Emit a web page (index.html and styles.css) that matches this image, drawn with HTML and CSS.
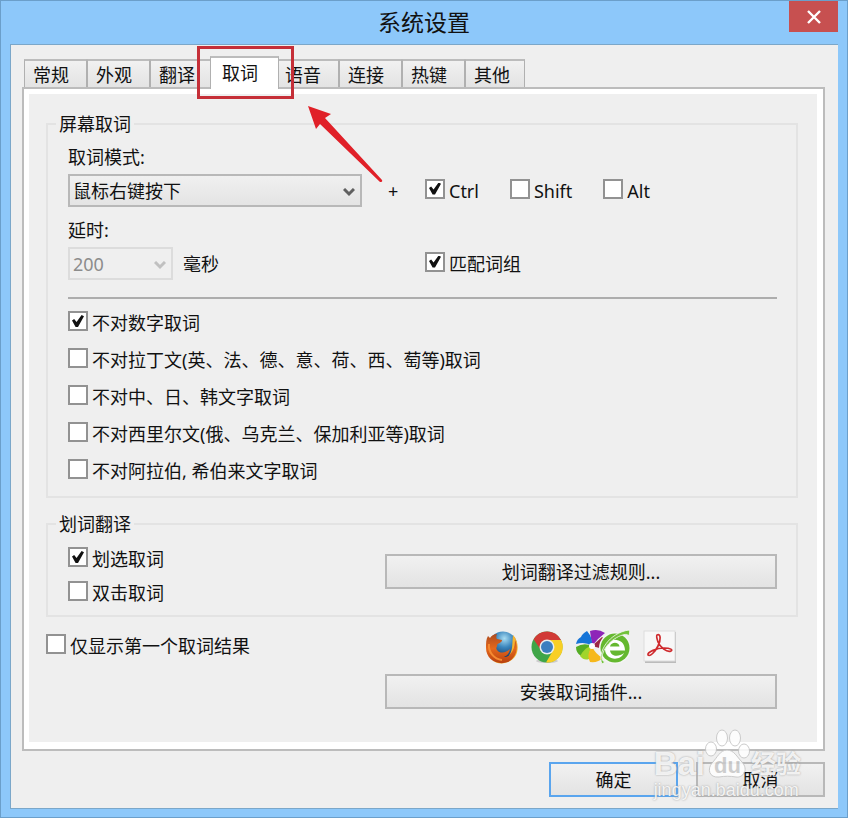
FILE: index.html
```
<!DOCTYPE html>
<html lang="zh-CN">
<head>
    <meta charset="UTF-8">
    <meta name="viewport" content="width=device-width, initial-scale=1.0">
    <title>系统设置</title>
    <link rel="stylesheet" href="styles.css">
</head>
<body>
    <div class="window">
        <header class="titlebar">
            <h1>系统设置</h1>
            <button class="close" type="button" aria-label="关闭">
                <svg width="16" height="14" viewBox="0 0 16 14"><path d="M2 1L14 13M14 1L2 13" stroke="#fff" stroke-width="2.4" fill="none"/></svg>
            </button>
        </header>
        <form class="client">
            <nav class="tabs">
                <button type="button" class="tab">常规</button>
                <button type="button" class="tab">外观</button>
                <button type="button" class="tab">翻译</button>
                <button type="button" class="tab active">取词</button>
                <button type="button" class="tab">语音</button>
                <button type="button" class="tab">连接</button>
                <button type="button" class="tab">热键</button>
                <button type="button" class="tab">其他</button>
            </nav>
            <div class="panel">
                <div class="page">
                    <fieldset class="group">
                        <legend>屏幕取词</legend>
                        <label class="caption" for="mode">取词模式:</label>
                        <div class="row">
                            <div class="left">
                                <div class="dropdown wide">
                                    <select id="mode"><option>鼠标右键按下</option></select>
                                    <svg class="chevron" width="12" height="9" viewBox="0 0 12 9"><path d="M1 1L6 6L11 1" /></svg>
                                </div>
                                <span class="plus">+</span>
                            </div>
                            <div class="keys">
                                <label class="check"><input type="checkbox" checked>Ctrl</label>
                                <label class="check"><input type="checkbox">Shift</label>
                                <label class="check"><input type="checkbox">Alt</label>
                            </div>
                        </div>
                        <label class="caption" for="delay">延时:</label>
                        <div class="row">
                            <div class="left">
                                <div class="dropdown">
                                    <select id="delay" disabled><option>200</option></select>
                                    <svg class="chevron" width="12" height="9" viewBox="0 0 12 9"><path d="M1 1L6 6L11 1" /></svg>
                                </div>
                                <span class="unit">毫秒</span>
                            </div>
                            <label class="check"><input type="checkbox" checked>匹配词组</label>
                        </div>
                        <hr>
                        <div class="list">
                            <label class="check"><input type="checkbox" checked>不对数字取词</label>
                            <label class="check"><input type="checkbox">不对拉丁文(英、法、德、意、荷、西、萄等)取词</label>
                            <label class="check"><input type="checkbox">不对中、日、韩文字取词</label>
                            <label class="check"><input type="checkbox">不对西里尔文(俄、乌克兰、保加利亚等)取词</label>
                            <label class="check"><input type="checkbox">不对阿拉伯, 希伯来文字取词</label>
                        </div>
                    </fieldset>

                    <fieldset class="group select-group">
                        <legend>划词翻译</legend>
                        <div class="split">
                            <div class="list tight">
                                <label class="check"><input type="checkbox" checked>划选取词</label>
                                <label class="check"><input type="checkbox">双击取词</label>
                            </div>
                            <button type="button" class="btn">划词翻译过滤规则...</button>
                        </div>
                    </fieldset>

                    <div class="split extra">
                        <label class="check"><input type="checkbox">仅显示第一个取词结果</label>
                        <div class="plugins">
                            <div class="icons">
                                <!-- firefox -->
                                <svg width="34" height="34" viewBox="0 0 34 34">
                                    <defs>
                                        <radialGradient id="globe" cx="55%" cy="25%" r="70%"><stop offset="0" stop-color="#a8dcf2"/><stop offset=".45" stop-color="#3b86bd"/><stop offset="1" stop-color="#123562"/></radialGradient>
                                        <linearGradient id="fox" x1="0" y1="0" x2="0" y2="1"><stop offset="0" stop-color="#ad4b20"/><stop offset=".5" stop-color="#e4681c"/><stop offset="1" stop-color="#b8400f"/></linearGradient>
                                    </defs>
                                    <circle cx="18" cy="15.500" r="14" fill="url(#globe)"/>
                                    <path d="M28 5C33 10 34 19 31 25C27 33 15 36 8 31C14 33 22 30 25 24C28 19 27 13 28 5Z" fill="#f6b32f"/>
                                    <path d="M30 10C34 18 31 28 23 32C12 36 1 29 1 18C1 13 1 9 3 6L5 8C6 6 9 4 12 4C11 6 11 8 12 9L17 10C17 13 13 13 12 15C13 17 10 17 12 20C15 24 21 23 25 19C24 25 20 27 18 27C24 28 30 21 30 10Z" fill="url(#fox)"/>
                                    <path d="M4 14C3 22 9 29 17 30" stroke="#f58a32" stroke-width="2" fill="none"/>
                                </svg>
                                <!-- chrome -->
                                <svg width="32" height="34" viewBox="0 0 32 34">
                                    <ellipse cx="16" cy="31" rx="11" ry="2" fill="#ccc"/>
                                    <circle cx="16" cy="17" r="15.500" fill="#3fa648"/>
                                    <path d="M2.600 9.300A15.500 15.500 0 0 1 30 10H16A7 7 0 0 0 9.500 19.500Z" fill="#d13a36"/>
                                    <path d="M16 10H30A15.500 15.500 0 0 1 15 32.500L22 20.500A7 7 0 0 0 16 10Z" fill="#f8cf25"/>
                                    <circle cx="16" cy="17" r="7.500" fill="#e9eef0"/>
                                    <circle cx="16" cy="17" r="6" fill="#3c7fc0"/>
                                </svg>
                                <!-- pinwheel and green browser -->
                                <svg width="56" height="36" viewBox="0 0 56 36">
                                    <g transform="translate(17 17)">
                                        <path d="M0 0L-2 -15Q6 -18 13 -13Q6 -8 0 0Z" fill="#8e25b8"/>
                                        <path d="M0 0L10 -9Q17 -6 15 4Z" fill="#9b2745"/>
                                        <path d="M0 0Q1 -8 -5 -15Q-10 -12 -11 -9Q-15 -7 -16 -2Q-7 -5 0 0Z" fill="#1675d8"/>
                                        <path d="M0 0Q-8 -4 -16 1Q-16 7 -11 10Q-7 5 0 0Z" fill="#55ad25"/>
                                        <path d="M0 0Q-6 0 -12 10Q-8 15 -3 13Q-3 5 0 0Z" fill="#a1d52c"/>
                                        <path d="M0 0Q-6 9 -2 16Q6 17 11 12Q3 8 0 0Z" fill="#f6b81c"/>
                                        <circle r="3" fill="#fff"/>
                                    </g>
                                    <circle cx="40" cy="19" r="16" fill="#f5f5f5"/>
                                    <circle cx="40" cy="19" r="14.500" fill="#65b82f"/>
                                    <path d="M50 21.500H35C36 28 44 28 49 24C45 33 30 31 30 20C30 8 50 7 50 21.500ZM35 17.500H44.500C44 12.500 36 12.500 35 17.500Z" fill="#fff"/>
                                    <path d="M27 35C22 23 34 4 54 1C55 3 55 5 53 7C54 2 33 9 28 24C26 29 27 32 30 33Z" fill="#72c23a" stroke="#f8f8f8" stroke-width=".8"/>
                                </svg>
                                <!-- pdf -->
                                <svg width="34" height="34" viewBox="0 0 34 34">
                                    <rect x="2" y="2" width="31" height="31" fill="#bbb"/>
                                    <rect x="1" y="1" width="31" height="30" fill="#f7f7f7" stroke="#ddd"/>
                                    <path d="M14 5C18 3 18 10 15 16C12 22 7 27 5 25C4 22 14 18 21 18C28 18 30 20 28 21C24 23 17 17 15 12C14 9 13 6 14 5Z" fill="none" stroke="#cf2a2d" stroke-width="1.700"/>
                                </svg>
                            </div>
                            <button type="button" class="btn">安装取词插件...</button>
                        </div>
                    </div>
                </div>
            </div>
            <footer class="actions">
                <button type="button" class="btn primary">确定</button>
                <button type="button" class="btn">取消</button>
            </footer>
        </form>

        <!-- highlight on the active tab -->
        <div class="marker"></div>
        <svg class="arrow" width="76" height="78" viewBox="0 0 76 78"><path d="M0 0L23 8L17 12L74 74Q75 76 72 76L12 18L8 23Z" fill="#e02028"/></svg>

        <div class="watermark">
            <div class="brand">
                <span>Bai</span>
                <span class="paw">
                    <svg width="46" height="50" viewBox="0 0 46 50">
                        <g fill="#fff" stroke="#c4c4c4">
                            <ellipse cx="6" cy="20" rx="5.500" ry="7"/>
                            <ellipse cx="17" cy="9" rx="5.500" ry="8"/>
                            <ellipse cx="30" cy="9" rx="5.500" ry="8"/>
                            <ellipse cx="39" cy="22" rx="5.500" ry="7"/>
                            <path d="M22 21C29 21 32 28 37 33C44 41 38 49 31 48C25 47 20 47 14 48C4 49 2 40 7 34C12 29 15 21 22 21Z"/>
                        </g>
                    </svg>
                    <b>du</b>
                </span>
                <span class="cn">经验</span>
            </div>
            <div class="site">jingyan.baidu.com</div>
        </div>
    </div>
</body>
</html>
```
FILE: styles.css
```
* {
    box-sizing: border-box;
}
body {
    margin: 0;
    font-family: "Noto Sans", "Noto Sans CJK SC", sans-serif;
    font-size: 18px;
    line-height: 24px;
    color: #111;
}
button, select {
    font: inherit;
    color: inherit;
}
.window {
    position: relative;
    padding: 0 9px;
    background: #8dc8fa;
    border: 1px solid #6b9fca;
    border-bottom-width: 2px;
}
.window::after {
    content: "";
    display: block;
    height: 8px;
}
.titlebar {
    position: relative;
    height: 43px;
}
.titlebar h1 {
    margin: 0;
    font-size: 23px;
    font-weight: normal;
    line-height: 43px;
    text-align: center;
}
.close {
    position: absolute;
    top: 0;
    right: 0;
    display: flex;
    align-items: center;
    justify-content: center;
    width: 49px;
    height: 31px;
    padding: 0;
    background: #c75050;
    border: none;
}
.client {
    padding: 11px 13px 11px 11px;
    background: #efefef;
    border: 1px solid #7ba7c9;
    border-right: none;
}

/* tabs */
.tabs {
    display: flex;
    align-items: flex-end;
    height: 31px;
    margin-left: 2px;
}
.tab {
    width: 63px;
    height: 28px;
    padding: 2px 0 0 8px;
    line-height: 24px;
    text-align: left;
    background: linear-gradient(#f1f1f1, #e3e3e3);
    border: 1px solid #b0b0b0;
    border-top: 2px solid #bcbcbc;
    border-bottom: none;
}
.tab:last-child {
    width: 60px;
}
.tab.active {
    position: relative;
    z-index: 1;
    width: 69px;
    height: 33px;
    margin: 0 -3px -2px;
    padding: 0 0 2px 11px;
    background: #fff;
}
.panel {
    padding: 5px 6px 7px 5px;
    background: #fff;
    border: 2px solid #bcbcbc;
}
.page {
    padding: 18px 19px 33px 17px;
    background: #efefef;
}

/* groups */
.group {
    min-width: 0;
    margin: 0;
    padding: 9px 19px 13px 20px;
    border: 2px solid #e3e3e3;
}
.select-group {
    margin-top: 14px;
    padding: 11px 19px 10px 20px;
}
.group legend {
    margin-left: -12px;
    padding: 0 3px;
}
.caption {
    display: block;
    margin-bottom: 5px;
}
.row {
    display: grid;
    grid-template-columns: 357px 1fr;
    align-items: center;
    margin-bottom: 11px;
}
.left, .keys {
    display: flex;
    align-items: center;
}
.keys {
    gap: 31px;
}
.plus {
    margin-left: 26px;
}
.unit {
    margin-left: 10px;
}
hr {
    height: 2px;
    margin: 17px 0 12px;
    background: #adadad;
    border: none;
}
.list {
    display: flex;
    flex-direction: column;
    gap: 13px;
}
.tight {
    gap: 10px;
}

/* controls */
.check {
    display: flex;
    align-items: flex-start;
    gap: 4px;
}
.check input {
    appearance: none;
    flex: none;
    width: 20px;
    height: 20px;
    margin: 0;
    padding: 2px;
    background: #fff;
    border: 2px solid #929292;
}
.check input:checked::before {
    content: "";
    display: block;
    width: 12px;
    height: 12px;
    background: #111;
    clip-path: polygon(0 46%, 18% 34%, 38% 58%, 80% 0, 100% 10%, 50% 100%, 30% 100%);
}
.dropdown {
    position: relative;
    width: 105px;
}
.dropdown.wide {
    width: 294px;
}
.dropdown select {
    appearance: none;
    display: block;
    width: 100%;
    height: 33px;
    padding: 0 30px 0 3px;
    background: linear-gradient(#f0f0f0, #e4e4e4);
    border: 2px solid #b8b8b8;
    border-radius: 0;
}
.dropdown select:disabled {
    color: #8c8c8c;
    background: #efefef;
    border-color: #dcdcdc;
    opacity: 1;
}
.chevron {
    position: absolute;
    top: 14px;
    right: 7px;
    fill: none;
    stroke: #606060;
    stroke-width: 3;
    pointer-events: none;
}
select:disabled + .chevron {
    stroke: #c0c0c0;
}
.btn {
    width: 100%;
    height: 35px;
    padding: 0;
    background: linear-gradient(#f1f1f1, #e3e3e3);
    border: 2px solid #b8b8b8;
}
.split {
    display: grid;
    grid-template-columns: 317px 1fr;
    align-items: start;
}
.split > .btn {
    margin-top: 7px;
}
.extra {
    grid-template-columns: 339px 1fr;
    padding-right: 21px;
}
.extra > .check {
    margin-top: 17px;
}
.plugins {
    padding-top: 12px;
}
.icons {
    display: flex;
    align-items: center;
    justify-content: center;
    gap: 12px;
    height: 36px;
    margin-bottom: 9px;
}
.actions {
    display: flex;
    justify-content: flex-end;
    gap: 18px;
    padding-top: 11px;
}
.actions .btn {
    width: 129px;
}
.btn.primary {
    border-color: #5aa5ee;
}

/* things drawn over the dialog */
.marker {
    position: absolute;
    top: 45px;
    left: 196px;
    width: 97px;
    height: 53px;
    border: 3px solid #c52f38;
    z-index: 2;
}
.arrow {
    position: absolute;
    top: 105px;
    left: 307px;
}
.watermark {
    position: absolute;
    right: 46px;
    bottom: 16px;
    color: rgba(255, 255, 255, 0.85);
    font-family: "Liberation Sans", "Noto Sans CJK SC", sans-serif;
    text-shadow: 0 0 2px #999;
    pointer-events: none;
}
.brand {
    display: flex;
    align-items: flex-end;
    font-size: 33px;
    font-weight: bold;
    line-height: 30px;
}
.paw {
    position: relative;
    height: 50px;
    opacity: 0.85;
}
.paw b {
    position: absolute;
    left: 9px;
    bottom: 0;
    font-size: 22px;
    line-height: 26px;
    color: #c8c8c8;
    text-shadow: none;
}
.brand .cn {
    font-size: 25px;
}
.site {
    font-size: 18px;
    line-height: 22px;
}
```
